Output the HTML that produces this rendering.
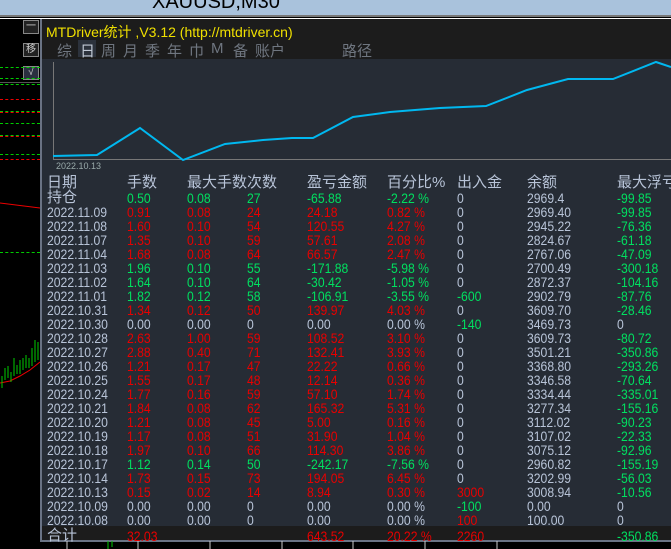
<!DOCTYPE html>
<html><head><meta charset="utf-8"><style>
*{margin:0;padding:0}
body{width:671px;height:549px;background:#000;position:relative;overflow:hidden;font-family:"Liberation Sans","Noto Sans CJK SC",sans-serif}
.top{position:absolute;left:0;top:0;width:671px;height:15px;background:#a9c2dc;border-bottom:2px solid #777}
.top span{position:absolute;left:152px;top:-9px;font-size:20px;color:#000}
.wl{position:absolute;left:0;top:18px;width:671px;height:1px;background:#fff}
.panel{position:absolute;left:40px;top:19px;width:631px;height:521px;background:#262c35;border-left:2px solid #6a7384;border-bottom:2px solid #6a7384}
.hdr{position:absolute;left:0;top:0;width:631px;height:40px;background:#1c1c1c}
.title{position:absolute;left:4px;top:3px;font-size:14px;color:#f0e000;white-space:nowrap}
.tabs{position:absolute;top:21px;font-size:15px;color:#6f7680}
.row{position:absolute;left:0;height:14px;width:631px;font-size:14px;line-height:14px;color:#b8c4d8;white-space:nowrap}
.row span{position:absolute;top:0;transform:scaleX(.87);transform-origin:left}
.r{color:#e80000}.g{color:#00e060}
.btn{position:absolute;left:23px;width:14px;height:12px;border:1px solid #888;color:#ccc;font-size:10px;line-height:12px;text-align:center;background:#222}
.d{position:absolute;left:0;width:40px;height:0;border-top:1px dashed}
</style></head><body>
<div class="top"><span>XAUUSD,M30</span></div>
<div class="wl"></div>
<div class="btn" style="top:20px">一</div>
<div class="btn" style="top:43px">移</div>
<div class="btn" style="top:66px;background:#2a3040">√</div>
<div class="d" style="top:67px;border-color:#0c0"></div>
<div class="d" style="top:78px;border-color:#0c0"></div>
<div style="position:absolute;left:0;top:82px;width:40px;height:1px;background:#555"></div>
<div class="d" style="top:84px;border-color:#0c0"></div>
<div class="d" style="top:99px;border-color:#e00"></div>
<div class="d" style="top:111px;border-color:#0c0"></div>
<div class="d" style="top:112px;border-color:#e00"></div>
<div class="d" style="top:123px;border-color:#0c0"></div>
<div class="d" style="top:135px;border-color:#0c0"></div>
<div class="d" style="top:136px;border-color:#e00"></div>
<div class="d" style="top:154px;border-color:#0c0"></div>
<div class="d" style="top:159px;border-color:#e00"></div>
<div class="d" style="top:252px;border-color:#0c0"></div>
<svg style="position:absolute;left:0;top:190px" width="40" height="210"><polyline points="0,13 40,18" stroke="#e00" fill="none"/><polyline points="0,193 10,191 20,186 30,180 40,172" stroke="#e00" fill="none"/><g stroke="#0c0"><line x1="2" y1="198" x2="2" y2="186"/><line x1="5" y1="190" x2="5" y2="178"/><line x1="8" y1="188" x2="8" y2="176"/><line x1="11" y1="192" x2="11" y2="182"/><line x1="14" y1="186" x2="14" y2="168"/><line x1="17" y1="184" x2="17" y2="175"/><line x1="20" y1="184" x2="20" y2="170"/><line x1="23" y1="180" x2="23" y2="168"/><line x1="26" y1="178" x2="26" y2="165"/><line x1="29" y1="178" x2="29" y2="168"/><line x1="32" y1="176" x2="32" y2="158"/><line x1="35" y1="172" x2="35" y2="150"/><line x1="38" y1="170" x2="38" y2="152"/></g></svg>
<div class="panel">
<div class="hdr">
<div class="title">MTDriver统计 ,V3.12 (http://mtdriver.cn)</div>
<div style="position:absolute;left:36px;top:21px;width:18px;height:17px;background:#2c323c"></div>
<span class="tabs" style="left:15px">综</span><span class="tabs" style="left:38px;color:#c0c8d4">日</span><span class="tabs" style="left:59px">周</span><span class="tabs" style="left:81px">月</span><span class="tabs" style="left:103px">季</span><span class="tabs" style="left:125px">年</span><span class="tabs" style="left:147px">巾</span><span class="tabs" style="left:169px">M</span><span class="tabs" style="left:191px">备</span><span class="tabs" style="left:213px">账户</span><span class="tabs" style="left:300px">路径</span>
</div>
<div style="position:absolute;left:0;top:507px;width:631px;height:14px;background:#1c1c1c"></div>
</div>
<svg style="position:absolute;left:0;top:0" width="671" height="175">
<line x1="53.5" y1="62" x2="53.5" y2="159" stroke="#777"/>
<line x1="53" y1="159.5" x2="671" y2="159.5" stroke="#777"/>
<polyline fill="none" stroke="#00b8f0" stroke-width="2" points="53,156 97,155 140,128 183,160 225,144 263,140 292,138 313,138 353,117 390,112 440,108 486,106 527,90 568,79 613,79 656,62 671,67"/>
<text x="56" y="169" font-size="9" fill="#9aa" font-family="Liberation Sans">2022.10.13</text>
</svg>
<div id="t" style="position:absolute;left:40px;top:0"></div>
<script>
var cols=[7,87,147,207,267,347,417,487,577];
var H=["日期","手数","最大手数","次数","盈亏金额","百分比%","出入金","余额","最大浮亏"];
var D=[
["持仓","0.50","0.08","27","-65.88","-2.22 %","0","2969.4","-99.85","g"],
["2022.11.09","0.91","0.08","24","24.18","0.82 %","0","2969.40","-99.85","r"],
["2022.11.08","1.60","0.10","54","120.55","4.27 %","0","2945.22","-76.36","r"],
["2022.11.07","1.35","0.10","59","57.61","2.08 %","0","2824.67","-61.18","r"],
["2022.11.04","1.68","0.08","64","66.57","2.47 %","0","2767.06","-47.09","r"],
["2022.11.03","1.96","0.10","55","-171.88","-5.98 %","0","2700.49","-300.18","g"],
["2022.11.02","1.64","0.10","64","-30.42","-1.05 %","0","2872.37","-104.16","g"],
["2022.11.01","1.82","0.12","58","-106.91","-3.55 %","-600","2902.79","-87.76","g"],
["2022.10.31","1.34","0.12","50","139.97","4.03 %","0","3609.70","-28.46","r"],
["2022.10.30","0.00","0.00","0","0.00","0.00 %","-140","3469.73","0","n"],
["2022.10.28","2.63","1.00","59","108.52","3.10 %","0","3609.73","-80.72","r"],
["2022.10.27","2.88","0.40","71","132.41","3.93 %","0","3501.21","-350.86","r"],
["2022.10.26","1.21","0.17","47","22.22","0.66 %","0","3368.80","-293.26","r"],
["2022.10.25","1.55","0.17","48","12.14","0.36 %","0","3346.58","-70.64","r"],
["2022.10.24","1.77","0.16","59","57.10","1.74 %","0","3334.44","-335.01","r"],
["2022.10.21","1.84","0.08","62","165.32","5.31 %","0","3277.34","-155.16","r"],
["2022.10.20","1.21","0.08","45","5.00","0.16 %","0","3112.02","-90.23","r"],
["2022.10.19","1.17","0.08","51","31.90","1.04 %","0","3107.02","-22.33","r"],
["2022.10.18","1.97","0.10","66","114.30","3.86 %","0","3075.12","-92.96","r"],
["2022.10.17","1.12","0.14","50","-242.17","-7.56 %","0","2960.82","-155.19","g"],
["2022.10.14","1.73","0.15","73","194.05","6.45 %","0","3202.99","-56.03","r"],
["2022.10.13","0.15","0.02","14","8.94","0.30 %","3000","3008.94","-10.56","r"],
["2022.10.09","0.00","0.00","0","0.00","0.00 %","-100","0.00","0","n"],
["2022.10.08","0.00","0.00","0","0.00","0.00 %","100","100.00","0","n"]];
var h="";
function row(y,cells,cls,fs,first){var s='<div class="row" style="top:'+y+'px;'+(fs?'font-size:'+fs+'px':'')+'">';for(var i=0;i<cells.length;i++){if(cells[i]==="")continue;s+='<span style="left:'+cols[i]+'px;'+((i==0&&first)||fs?'transform:none;':'')+(i==0&&first?'font-size:'+first+'px':'')+'" class="'+(cls[i]||"")+'">'+cells[i]+'</span>';}return s+'</div>';}
h+=row(176,H,[],15);
for(var k=0;k<D.length;k++){var d=D[k],c=d[9],cl=[""];for(var i=1;i<9;i++){var v=d[i],x="";
 if(i<=5)x=(c=="n")?"":c;
 if(i==6)x=(v=="0")?"":(v.charAt(0)=="-"?"g":"r");
 if(i==8)x=(v=="0")?"":"g";
 cl.push(x);}
 h+=row(191+k*14,d.slice(0,9),cl,null,k==0?15:null);}
h+=row(529,["合计","32.03","","","643.52","20.22 %","2260","","-350.86"],["","r","","","r","r","r","","g"],null,15);
document.getElementById("t").innerHTML=h;
</script>
<svg style="position:absolute;left:0;top:541px" width="671" height="8"><g stroke="#ccc"><line x1="67" y1="0" x2="67" y2="8"/><line x1="138" y1="0" x2="138" y2="8"/><line x1="210" y1="0" x2="210" y2="8"/><line x1="282" y1="0" x2="282" y2="8"/><line x1="353" y1="0" x2="353" y2="8"/><line x1="425" y1="0" x2="425" y2="8"/><line x1="497" y1="0" x2="497" y2="8"/></g><g stroke="#0c0"><line x1="108" y1="0" x2="108" y2="8"/><line x1="112" y1="0" x2="112" y2="6"/></g></svg>
</body></html>
